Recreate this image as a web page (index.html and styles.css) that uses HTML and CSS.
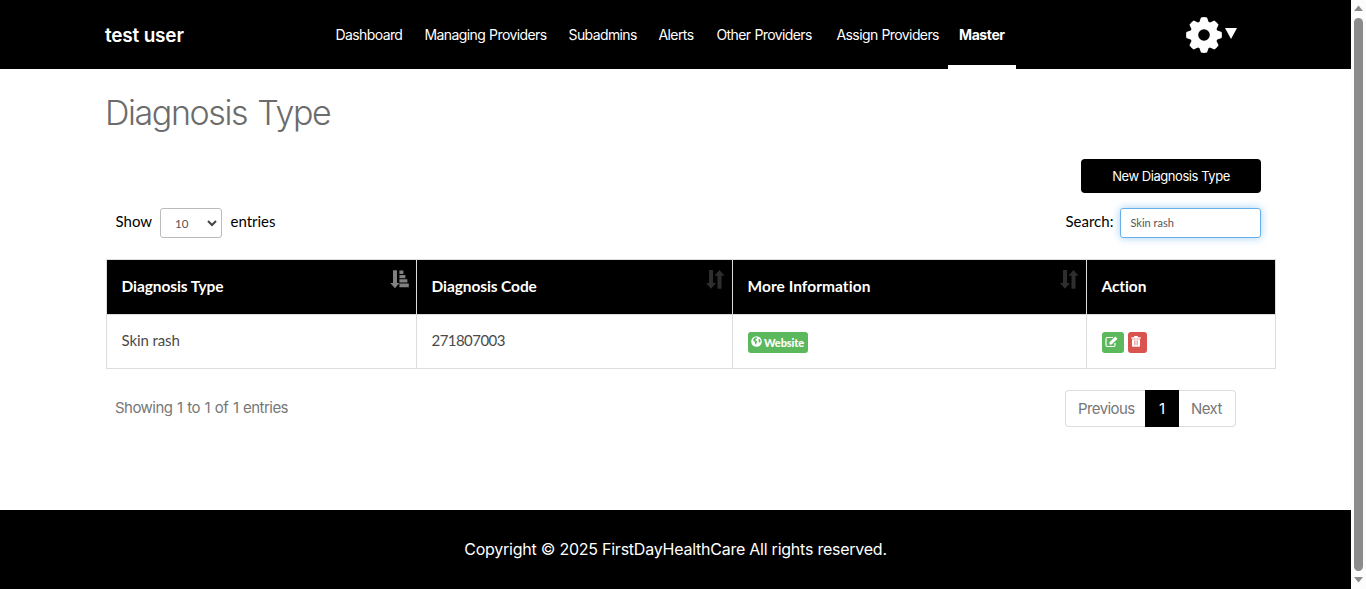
FILE: index.html
```
<!DOCTYPE html>
<html lang="en">
<head>
<meta charset="utf-8">
<title>Diagnosis Type</title>
<link rel="stylesheet" href="styles.css">
</head>
<body>
<svg class="defs" width="0" height="0">
  <symbol id="sort" viewBox="0 0 19 19"><path d="M3 0h4v13h3l-5 5.700l-5-5.700h3zM11.500 18.700v-13h-3l5-5.700l5 5.700h-3v13z"/></symbol>
  <symbol id="sort-asc" viewBox="0 0 19 19"><path d="M3 .3h4v12.700h2.500l-4.600 5.200L.3 13H3zM9.400.6h4v3.400h-4zM9.400 5h6v3.300h-6zM9.400 9.300h8v3.300h-8zM9.400 13.600h9.400v3.600H9.400z"/></symbol>
</svg>
<div class="window">
  <div class="page">
    <header class="topbar">
      <div class="brand"><span>test user</span></div>
      <nav class="nav">
        <a>Dashboard</a><a>Managing Providers</a><a>Subadmins</a><a>Alerts</a><a>Other Providers</a><a>Assign Providers</a><a class="active">Master</a>
      </nav>
      <div class="settings">
        <svg width="36" height="36" viewBox="-18 -18 36 36" fill="#fff">
          <g id="teeth"><path d="M-5-12L-3-17.600Q0-18.200 3-17.600L5-12V12L3 17.600Q0 18.200-3 17.600L-5 12z"/><path transform="rotate(90)" d="M-5-12L-3-17.600Q0-18.200 3-17.600L5-12V12L3 17.600Q0 18.200-3 17.600L-5 12z"/></g>
          <use href="#teeth" transform="rotate(45)"/>
          <circle r="13.800"/><circle r="5.800" fill="#000"/>
        </svg>
        <svg class="caret" width="12" height="11" viewBox="0 0 12 11" fill="#fff"><path d="M0 0h12L6 11z"/></svg>
      </div>
    </header>
    <main class="content">
      <h1><span>Diagnosis Type</span></h1>
      <div class="actions"><button class="new"><span>New Diagnosis Type</span></button></div>
      <div class="filters">
        <div class="length"><span class="show">Show</span>
          <div class="select"><span>10</span><svg width="10" height="7" viewBox="0 0 10 7" fill="none" stroke="#444" stroke-width="2"><path d="M1 1l4 4 4-4"/></svg></div>
          <span class="entries">entries</span></div>
        <div class="search"><span class="slabel">Search:</span><div class="input">Skin rash</div></div>
      </div>
      <table>
        <colgroup><col class="c1"><col class="c2"><col class="c3"><col class="c4"></colgroup>
        <thead><tr>
          <th><div class="head"><span>Diagnosis Type</span><svg class="sort on"><use href="#sort-asc"/></svg></div></th>
          <th><div class="head"><span>Diagnosis Code</span><svg class="sort"><use href="#sort"/></svg></div></th>
          <th><div class="head"><span class="more">More Information</span><svg class="sort"><use href="#sort"/></svg></div></th>
          <th><div class="head"><span>Action</span></div></th>
        </tr></thead>
        <tbody><tr>
          <td><div class="cell">Skin rash</div></td><td><div class="cell code">271807003</div></td>
          <td><div class="tags"><span class="tag website"><svg width="11" height="11" viewBox="0 0 11 11"><circle cx="5.500" cy="5.500" r="5.300" fill="#fff"/><path fill="#5cb85c" d="M4.200 1.200l2 .2-.4 1.200-1.200.6-.4 1.100 1.300.5.7.9-.7 1.200-.5 1.600-.9-.8-.2-1.600L2.700 5 2 3.600zM7.400 2.700l1.300.2.8 1.700-.2 1.600-1.200.2-.7-1.300.4-.9z"/></svg><span>Website</span></span></div></td>
          <td><div class="tags">
            <span class="tag edit"><svg width="13" height="12" viewBox="0 0 13 12"><path d="M8 1.500H2.500Q1 1.500 1 3v6q0 1.500 1.500 1.500h6q1.500 0 1.500-1.500V7" fill="none" stroke="#fff" stroke-width="1.200"/><path d="M4.500 8.500V6.300L10.300.5l2.200 2.200-5.800 5.800z" fill="#fff"/></svg></span>
            <span class="tag del"><svg width="10" height="11" viewBox="0 0 10 11"><path fill="#fff" d="M3.200 0h3.600v1.200H9.700v1.500H.3V1.200h2.900zM1 3.300h8V10q0 .8-.8.8H1.800Q1 10.800 1 10z"/><path d="M3.500 4.300v5M5 4.300v5M6.500 4.300v5" stroke="#d9534f" stroke-width=".5"/></svg></span>
          </div></td>
        </tr></tbody>
      </table>
      <div class="bottom">
        <span class="info">Showing 1 to 1 of 1 entries</span>
        <div class="pager"><a class="prev"><span>Previous</span></a><a class="cur">1</a><a class="next"><span>Next</span></a></div>
      </div>
    </main>
    <footer><span>Copyright © 2025 FirstDayHealthCare All rights reserved.</span></footer>
  </div>
  <div class="scrollbar">
    <svg width="9" height="6" viewBox="0 0 9 6" fill="#8b8b8b"><path d="M0 6L4.500.5 9 6z"/></svg>
    <div class="thumb"></div>
    <svg width="9" height="6" viewBox="0 0 9 6" fill="#8b8b8b"><path d="M0 0h9L4.500 5.500z"/></svg>
  </div>
</div>
</body>
</html>
```
FILE: styles.css
```
* { box-sizing: border-box; }
body { margin: 0; background: #fff; font-family: Lato, "Open Sans", sans-serif; color: #4a4a4a; overflow: hidden; }
.defs { position: absolute; }
svg { display: block; flex: none; }
span, a { white-space: nowrap; }
.window { display: flex; height: 589px; }
.page { width: 1351px; display: flex; flex-direction: column; }
.topbar { height: 69px; background: #000; color: #fff; display: flex; padding-left: 105px; font-family: Inter, sans-serif; }
.brand { width: 219px; line-height: 71px; font-size: 19px; font-weight: 600; letter-spacing: -0.2px; }
.nav { display: grid; grid-template-columns: 89px 144px 90px 58px 120px 123px 68px; font-size: 14px; letter-spacing: -0.6px; word-spacing: 0.6px; line-height: 70px; }
.nav a { padding-left: 11.5px; height: 69px; }
.nav .active { font-weight: 700; letter-spacing: -0.4px; padding-left: 11px; border-bottom: 4px solid #fff; }
.settings { display: flex; padding: 17px 0 0 170px; gap: 3px; }
.caret { margin-top: 11px; }
.content { height: 441px; padding-left: 106px; }
h1 { margin: 0; height: 90px; padding-top: 20px; font: 350 34px/48px Inter, sans-serif; letter-spacing: -1.4px; word-spacing: 2px; color: #6c6c6c; margin-left: -1px; }
.actions { width: 1155px; display: flex; justify-content: flex-end; }
.new { width: 180px; height: 34px; padding: 0; border: 0; border-radius: 4px; background: #000; color: #fff; font: 400 13px/35px Inter, sans-serif; letter-spacing: -0.45px; }
.filters { width: 1155px; height: 45px; margin-top: 15px; margin-bottom: 6px; display: flex; justify-content: space-between; align-items: flex-start; padding-left: 9.5px; color: #000; font-size: 15px; line-height: 27px; }
.length, .search { display: flex; }
.show { width: 44.5px; }
.select { width: 62px; height: 30px; border: 1px solid #bbb; border-radius: 3px; display: flex; justify-content: space-between; align-items: center; padding: 0 4px 0 14px; margin-right: 8.5px; font-size: 11.5px; color: #555; }
.slabel { width: 54.5px; }
.input { width: 141px; height: 30px; border: 1px solid #66afe9; border-radius: 3px; box-shadow: 0 0 8px rgba(102,175,233,.6); padding-left: 9.5px; font-size: 11px; line-height: 28px; color: #555; }
table { width: 1170px; table-layout: fixed; border-collapse: separate; border-spacing: 0; border: solid #ddd; border-width: 1px 0 0 1px; }
.c1 { width: 310px; } .c2 { width: 316px; } .c3 { width: 354px; } .c4 { width: 189px; }
th, td { border: solid #ddd; border-width: 0 1px 1px 0; padding: 0 7px 0 14.5px; text-align: left; }
th { height: 55px; background: #000; color: #fff; font-size: 15.500px; font-weight: 700; letter-spacing: -0.1px; }
td { height: 54px; font-size: 15px; }
.head { display: flex; justify-content: space-between; height: 35px; line-height: 33px; }
.more { letter-spacing: 0.05px; }
.cell { height: 20px; line-height: 17px; letter-spacing: -0.1px; }
.code { letter-spacing: -0.55px; }
.sort { width: 19px; height: 19px; fill: #2e2e2e; }
.sort.on { fill: #808080; }
.tags { display: flex; gap: 4px; margin-left: 0.5px; padding-top: 1px; }
.tag { height: 21px; border-radius: 3px; background: #5cb85c; color: #fff; font-size: 11px; font-weight: 900; letter-spacing: -0.1px; line-height: 22px; display: flex; padding: 0 3px; }
.tag svg { margin-top: 4px; }
.website { width: 60px; gap: 2px; }
.edit { width: 22px; }
.del { width: 19px; background: #d9534f; }
.bottom { width: 1130px; margin-top: 21px; padding-left: 9px; display: flex; justify-content: space-between; font-family: Inter, sans-serif; font-size: 15px; color: #777; }
.info { line-height: 35px; letter-spacing: -0.55px; word-spacing: 1px; }
.pager { display: flex; height: 37px; line-height: 35px; letter-spacing: -0.6px; }
.pager a { border: 1px solid #ddd; padding-left: 12px; }
.pager .prev { width: 80px; border-right: 0; border-radius: 4px 0 0 4px; }
.pager .cur { width: 34px; padding-left: 13px; background: #000; color: #fff; border-color: #000; }
.pager .next { width: 57px; border-left: 0; border-radius: 0 4px 4px 0; }
footer { height: 79px; background: #000; color: #fff; text-align: center; font: 400 16px/78px Inter, sans-serif; letter-spacing: -0.24px; }
.scrollbar { width: 15px; background: #fcfcfc; display: flex; flex-direction: column; align-items: center; justify-content: space-between; padding: 5px 0 6px; }
.thumb { width: 9px; height: 553px; border-radius: 5px; background: #8b8b8b; }
```
